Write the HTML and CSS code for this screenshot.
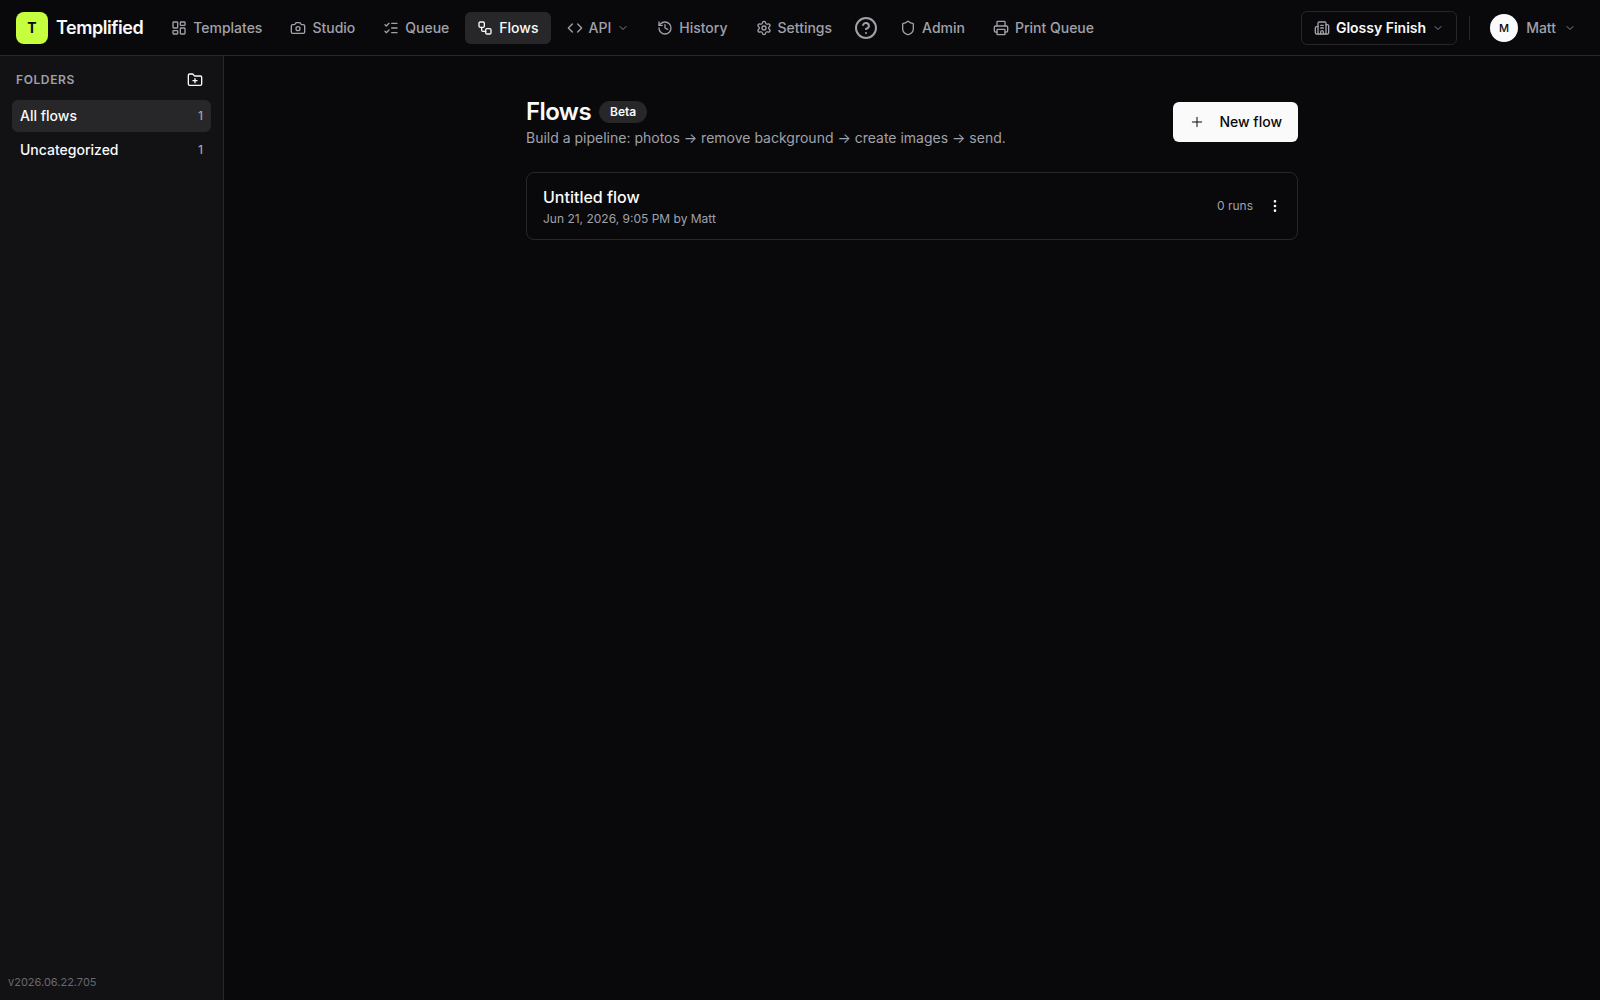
FILE: index.html
```html
<!DOCTYPE html>
<html lang="en">
<head>
  <meta charset="UTF-8">
  <meta name="viewport" content="width=device-width, initial-scale=1.0">
  <title>Flows - Templified</title>
  <link rel="stylesheet" href="styles.css">
</head>
<body>
  <header class="topbar">
    <a class="brand" href="#">
      <span class="brand-mark">T</span>
      <span class="brand-name">Templified</span>
    </a>

    <nav class="nav">
      <a class="nav-link" href="#">
        <svg class="icon" viewBox="0 0 24 24"><rect width="7" height="9" x="3" y="3" rx="1"/><rect width="7" height="5" x="14" y="3" rx="1"/><rect width="7" height="9" x="14" y="12" rx="1"/><rect width="7" height="5" x="3" y="16" rx="1"/></svg>
        Templates
      </a>
      <a class="nav-link" href="#">
        <svg class="icon" viewBox="0 0 24 24"><path d="M13.997 4a2 2 0 0 1 1.760 1.050l.486.9A2 2 0 0 0 18.003 7H20a2 2 0 0 1 2 2v9a2 2 0 0 1-2 2H4a2 2 0 0 1-2-2V9a2 2 0 0 1 2-2h1.997a2 2 0 0 0 1.759-1.048l.489-.904A2 2 0 0 1 10.004 4z"/><circle cx="12" cy="13" r="3"/></svg>
        Studio
      </a>
      <a class="nav-link" href="#">
        <svg class="icon" viewBox="0 0 24 24"><path d="M13 5h8"/><path d="M13 12h8"/><path d="M13 19h8"/><path d="m3 17 2 2 4-4"/><path d="m3 7 2 2 4-4"/></svg>
        Queue
      </a>
      <a class="nav-link active" href="#" aria-current="page">
        <svg class="icon" viewBox="0 0 24 24"><rect width="8" height="8" x="3" y="3" rx="2"/><path d="M7 11v4a2 2 0 0 0 2 2h4"/><rect width="8" height="8" x="13" y="13" rx="2"/></svg>
        Flows
      </a>
      <button class="nav-link" type="button">
        <svg class="icon" viewBox="0 0 24 24"><path d="m16 18 6-6-6-6"/><path d="m8 6-6 6 6 6"/></svg>
        API
        <svg class="icon chevron" viewBox="0 0 24 24"><path d="m6 9 6 6 6-6"/></svg>
      </button>
      <a class="nav-link" href="#">
        <svg class="icon" viewBox="0 0 24 24"><path d="M3 12a9 9 0 1 0 9-9 9.750 9.750 0 0 0-6.740 2.740L3 8"/><path d="M3 3v5h5"/><path d="M12 7v5l4 2"/></svg>
        History
      </a>
      <a class="nav-link" href="#">
        <svg class="icon" viewBox="0 0 24 24"><path d="M9.671 4.136a2.340 2.340 0 0 1 4.659 0 2.340 2.340 0 0 0 3.319 1.915 2.340 2.340 0 0 1 2.330 4.033 2.340 2.340 0 0 0 0 3.831 2.340 2.340 0 0 1-2.330 4.033 2.340 2.340 0 0 0-3.319 1.915 2.340 2.340 0 0 1-4.659 0 2.340 2.340 0 0 0-3.320-1.915 2.340 2.340 0 0 1-2.330-4.033 2.340 2.340 0 0 0 0-3.831A2.340 2.340 0 0 1 6.350 6.051a2.340 2.340 0 0 0 3.319-1.915"/><circle cx="12" cy="12" r="3"/></svg>
        Settings
      </a>
      <button class="help" type="button" aria-label="Help">
        <svg class="icon icon-lg" viewBox="0 0 24 24"><circle cx="12" cy="12" r="10"/><path d="M9.090 9a3 3 0 0 1 5.830 1c0 2-3 3-3 3"/><path d="M12 17h.01"/></svg>
      </button>
      <a class="nav-link" href="#">
        <svg class="icon" viewBox="0 0 24 24"><path d="M20 13c0 5-3.500 7.500-7.660 8.950a1 1 0 0 1-.67-.01C7.500 20.500 4 18 4 13V6a1 1 0 0 1 1-1c2 0 4.500-1.200 6.240-2.720a1.170 1.170 0 0 1 1.520 0C14.510 3.810 17 5 19 5a1 1 0 0 1 1 1z"/></svg>
        Admin
      </a>
      <a class="nav-link" href="#">
        <svg class="icon" viewBox="0 0 24 24"><path d="M6 18H4a2 2 0 0 1-2-2v-5a2 2 0 0 1 2-2h16a2 2 0 0 1 2 2v5a2 2 0 0 1-2 2h-2"/><path d="M6 9V3a1 1 0 0 1 1-1h10a1 1 0 0 1 1 1v6"/><rect x="6" y="14" width="12" height="8" rx="1"/></svg>
        Print Queue
      </a>
    </nav>

    <div class="account">
      <button class="org" type="button">
        <svg class="icon" viewBox="0 0 24 24"><path d="M10 12h4"/><path d="M10 8h4"/><path d="M14 21v-3a2 2 0 0 0-4 0v3"/><path d="M6 10H4a2 2 0 0 0-2 2v7a2 2 0 0 0 2 2h16a2 2 0 0 0 2-2V9a2 2 0 0 0-2-2h-2"/><path d="M6 21V5a2 2 0 0 1 2-2h8a2 2 0 0 1 2 2v16"/></svg>
        Glossy Finish
        <svg class="icon chevron" viewBox="0 0 24 24"><path d="m6 9 6 6 6-6"/></svg>
      </button>
      <span class="divider"></span>
      <button class="user" type="button">
        <span class="avatar">M</span>
        Matt
        <svg class="icon chevron" viewBox="0 0 24 24"><path d="m6 9 6 6 6-6"/></svg>
      </button>
    </div>
  </header>

  <div class="layout">
    <aside class="sidebar">
      <div class="sidebar-head">
        <h2>Folders</h2>
        <button class="icon-btn" type="button" aria-label="New folder">
          <svg class="icon" viewBox="0 0 24 24"><path d="M12 10v6"/><path d="M9 13h6"/><path d="M20 20a2 2 0 0 0 2-2V8a2 2 0 0 0-2-2h-7.900a2 2 0 0 1-1.690-.9L9.600 3.900A2 2 0 0 0 7.930 3H4a2 2 0 0 0-2 2v13a2 2 0 0 0 2 2Z"/></svg>
        </button>
      </div>
      <div class="folders">
        <button class="folder active" type="button">All flows <span class="count">1</span></button>
        <button class="folder" type="button">Uncategorized <span class="count">1</span></button>
      </div>
      <div class="version">v2026.06.22.705</div>
    </aside>

    <main class="content">
      <div class="page">
        <div class="page-head">
          <div>
            <div class="title-row">
              <h1>Flows</h1>
              <span class="badge">Beta</span>
            </div>
            <p class="subtitle">Build a pipeline: photos → remove background → create images → send.</p>
          </div>
          <button class="new-flow" type="button">
            <svg class="icon" viewBox="0 0 24 24"><path d="M5 12h14"/><path d="M12 5v14"/></svg>
            New flow
          </button>
        </div>

        <div class="flow-card">
          <div class="flow-info">
            <a class="flow-name" href="#">Untitled flow</a>
            <div class="flow-meta">Jun 21, 2026, 9:05 PM by Matt</div>
          </div>
          <span class="flow-runs">0 runs</span>
          <button class="icon-btn" type="button" aria-label="Flow options">
            <svg class="icon" viewBox="0 0 24 24"><circle cx="12" cy="12" r="1"/><circle cx="12" cy="5" r="1"/><circle cx="12" cy="19" r="1"/></svg>
          </button>
        </div>
      </div>
    </main>
  </div>
</body>
</html>
```

FILE: styles.css
```css
:root {
  --bg: #09090b;
  --panel: #121214;
  --muted-bg: #27272a;
  --border: #27272a;
  --text: #fafafa;
  --muted: #a1a1aa;
  --lime: #c6ff3d;
}
* {
  box-sizing: border-box;
}
body {
  margin: 0;
  min-height: 100vh;
  display: flex;
  flex-direction: column;
  font-family: Inter, sans-serif;
  font-size: 14px;
  line-height: 20px;
  background: var(--bg);
  color: var(--text);
}
h1, h2, p {
  margin: 0;
}
a {
  color: inherit;
  text-decoration: none;
}
button {
  font: inherit;
  color: inherit;
  background: none;
  border: none;
  padding: 0;
  cursor: pointer;
}
.icon {
  width: 16px;
  height: 16px;
  flex-shrink: 0;
  fill: none;
  stroke: currentColor;
  stroke-width: 2;
  stroke-linecap: round;
  stroke-linejoin: round;
}
.icon-lg {
  width: 24px;
  height: 24px;
}
.chevron {
  width: 12px;
  height: 12px;
  opacity: 0.8;
}

/* top bar */
.topbar {
  display: flex;
  align-items: center;
  height: 56px;
  padding: 0 16px;
  border-bottom: 1px solid var(--border);
}
.brand {
  display: flex;
  align-items: center;
  gap: 8px;
  margin-right: 16px;
}
.brand-mark {
  display: flex;
  align-items: center;
  justify-content: center;
  width: 32px;
  height: 32px;
  border-radius: 8px;
  background: var(--lime);
  color: var(--bg);
  font-weight: 700;
}
.brand-name {
  font-size: 18px;
  font-weight: 600;
  letter-spacing: -0.025em;
}
.nav {
  display: flex;
  align-items: center;
  gap: 4px;
}
.nav-link {
  display: flex;
  align-items: center;
  gap: 6px;
  height: 32px;
  padding: 0 12px;
  border-radius: 6px;
  color: var(--muted);
  font-weight: 500;
  white-space: nowrap;
}
.nav-link:hover {
  color: var(--text);
}
.nav-link.active {
  background: var(--muted-bg);
  color: var(--text);
}
.help {
  display: flex;
  padding: 0 6px;
  color: var(--muted);
}
.account {
  display: flex;
  align-items: center;
  gap: 12px;
  margin-left: auto;
}
.org {
  display: flex;
  align-items: center;
  gap: 6px;
  height: 34px;
  padding: 0 12px;
  border: 1px solid var(--border);
  border-radius: 6px;
  font-weight: 600;
}
.org .icon {
  color: var(--muted);
}
.divider {
  width: 1px;
  height: 24px;
  background: var(--border);
}
.user {
  display: flex;
  align-items: center;
  gap: 8px;
  padding: 0 8px;
  color: var(--muted);
  font-weight: 500;
}
.avatar {
  display: flex;
  align-items: center;
  justify-content: center;
  width: 28px;
  height: 28px;
  border-radius: 50%;
  background: var(--text);
  color: var(--bg);
  font-size: 11px;
}

/* sidebar */
.layout {
  flex: 1;
  display: flex;
}
.sidebar {
  display: flex;
  flex-direction: column;
  width: 224px;
  flex-shrink: 0;
  padding: 10px 12px 8px;
  background: var(--panel);
  border-right: 1px solid var(--border);
}
.sidebar-head {
  display: flex;
  align-items: center;
  justify-content: space-between;
  padding: 0 2px 0 4px;
  margin-bottom: 6px;
}
.sidebar-head h2 {
  font-size: 12px;
  font-weight: 600;
  letter-spacing: 0.05em;
  text-transform: uppercase;
  color: var(--muted);
}
.icon-btn {
  display: flex;
  align-items: center;
  justify-content: center;
  width: 28px;
  height: 28px;
  border-radius: 6px;
}
.folders {
  display: flex;
  flex-direction: column;
  gap: 2px;
}
.folder {
  display: flex;
  align-items: center;
  justify-content: space-between;
  height: 32px;
  padding: 0 8px;
  border-radius: 6px;
  font-weight: 500;
}
.folder.active {
  background: var(--muted-bg);
}
.count {
  font-size: 12px;
  color: var(--muted);
}
.version {
  margin: auto -4px 0;
  font-size: 11px;
  color: #68686e;
}

/* page */
.content {
  flex: 1;
}
.page {
  max-width: 820px;
  margin: 0 auto;
  padding: 40px 24px;
}
.page-head {
  display: flex;
  align-items: center;
  justify-content: space-between;
  margin-bottom: 24px;
}
.title-row {
  display: flex;
  align-items: center;
  gap: 8px;
}
h1 {
  font-size: 24px;
  line-height: 32px;
  font-weight: 600;
  letter-spacing: -0.025em;
}
.badge {
  padding: 3px 11px;
  border-radius: 11px;
  background: var(--muted-bg);
  font-size: 12px;
  line-height: 16px;
  font-weight: 600;
}
.subtitle {
  color: var(--muted);
}
.new-flow {
  display: flex;
  align-items: center;
  gap: 14px;
  height: 40px;
  padding: 0 16px;
  border-radius: 6px;
  background: var(--text);
  color: var(--bg);
  font-weight: 500;
}
.new-flow .icon {
  stroke-width: 1.5;
}
.flow-card {
  display: flex;
  align-items: center;
  gap: 8px;
  padding: 12px 8px 12px 16px;
  border: 1px solid var(--border);
  border-radius: 8px;
}
.flow-info {
  flex: 1;
}
.flow-name {
  display: block;
  margin-bottom: 2px;
  font-size: 16px;
  line-height: 24px;
  font-weight: 500;
}
.flow-meta, .flow-runs {
  font-size: 12px;
  line-height: 16px;
  color: var(--muted);
}
```
